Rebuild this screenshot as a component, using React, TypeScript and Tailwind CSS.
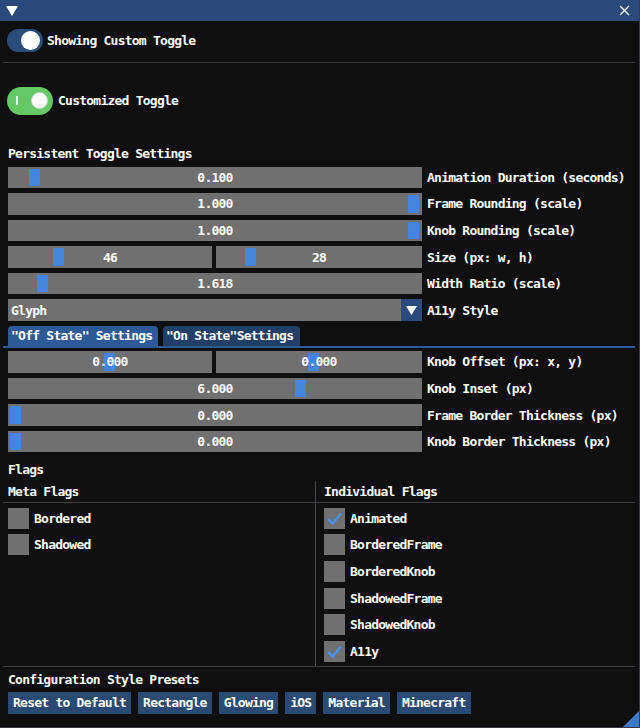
import React from "react";

const Slider = ({
  text,
  grab,
  className = "w-[414px]",
}: {
  text: string;
  grab: number;
  className?: string;
}) => (
  <div className={`relative h-[21.6px] bg-[#707070] flex items-center justify-center ${className}`}>
    <div className="absolute top-[2px] bottom-[2px] w-[11px] bg-[#4485df]" style={{ left: grab }} />
    <span className="relative">{text}</span>
  </div>
);

const Row = ({ label, children }: { label: string; children: React.ReactNode }) => (
  <div className="flex items-center gap-[5px] h-[21.6px]">
    {children}
    <span>{label}</span>
  </div>
);

const Check = ({ label, checked = false }: { label: string; checked?: boolean }) => (
  <div className="flex items-center gap-[5px] h-[21.6px]">
    <div className="w-[21px] h-[21px] bg-[#707070] flex items-center justify-center">
      {checked && (
        <svg width="21" height="21" viewBox="0 0 21 21">
          <polyline points="4,11 8.5,15.5 17,5.5" fill="none" stroke="#4a90e8" strokeWidth="2.6" />
        </svg>
      )}
    </div>
    <span>{label}</span>
  </div>
);

const presets = ["Reset to Default", "Rectangle", "Glowing", "iOS", "Material", "Minecraft"];

export default function App() {
  return (
    <div className="relative w-[640px] h-[728px] bg-[#0f0f0f] text-white font-['DejaVu_Sans_Mono',monospace] font-bold text-[13px] tracking-[-0.76px] leading-[13px] border-r border-b border-[#3a3a42] overflow-hidden">
      {/* title bar */}
      <div className="h-[21px] bg-[#294a7a] flex items-center justify-between pl-[6px] pr-[9px]">
        <svg width="12" height="10" viewBox="0 0 12 10">
          <polygon points="0,0 12,0 6,10" fill="#fff" />
        </svg>
        <svg width="11" height="11" viewBox="0 0 11 11">
          <path d="M1 1 L10 10 M10 1 L1 10" stroke="#fff" strokeWidth="1.4" />
        </svg>
      </div>

      <div className="flex flex-col pl-[8px] pr-[4px]">
        {/* toggle 1 */}
        <div className="mt-[8px] flex items-center gap-[4px] h-[23px] -ml-[1px]">
          <div className="w-[36px] h-[23px] rounded-full bg-[#2b4b78] flex items-center justify-end pr-[3px]">
            <div className="w-[19px] h-[19px] rounded-full bg-white" />
          </div>
          <span>Showing Custom Toggle</span>
        </div>

        <div className="mt-[9.5px] h-[1px] bg-[#36363d] -ml-[5px]" />

        {/* toggle 2 */}
        <div className="mt-[24px] flex items-center gap-[5px] h-[28px] -ml-[1px]">
          <div className="w-[46px] h-[28px] rounded-full bg-[#64c864] flex items-center justify-between pl-[9px] pr-[5px]">
            <div className="w-[1.5px] h-[9px] bg-[#e8f6e8]" />
            <div className="w-[17px] h-[17px] rounded-full bg-white border border-[#d0d0d0]" />
          </div>
          <span>Customized Toggle</span>
        </div>

        <div className="mt-[32.5px]">Persistent Toggle Settings</div>

        <div className="mt-[6.5px] flex flex-col gap-[5px]">
          <Row label="Animation Duration (seconds)">
            <Slider text="0.100" grab={21} />
          </Row>
          <Row label="Frame Rounding (scale)">
            <Slider text="1.000" grab={400} />
          </Row>
          <Row label="Knob Rounding (scale)">
            <Slider text="1.000" grab={400} />
          </Row>
          <Row label="Size (px: w, h)">
            <div className="flex gap-[4px]">
              <Slider text="46" grab={45} className="w-[204px]" />
              <Slider text="28" grab={29} className="w-[206px]" />
            </div>
          </Row>
          <Row label="Width Ratio (scale)">
            <Slider text="1.618" grab={29} />
          </Row>
          <Row label="A11y Style">
            <div className="w-[414px] h-[21.6px] bg-[#707070] flex items-center justify-between">
              <span className="pl-[3px]">Glyph</span>
              <div className="w-[21px] h-full bg-[#294a7a] flex items-center justify-center">
                <svg width="11" height="9" viewBox="0 0 11 9">
                  <polygon points="0,0 11,0 5.5,9" fill="#fff" />
                </svg>
              </div>
            </div>
          </Row>
        </div>

        {/* tabs */}
        <div className="mt-[4.5px] flex gap-[5px] h-[20px]">
          <div className="w-[150px] rounded-t-[4px] bg-[#2d5a95] flex items-center pl-[3px]">"Off State" Settings</div>
          <div className="w-[137px] rounded-t-[4px] bg-[#223f68] flex items-center pl-[3px]">"On State"Settings</div>
        </div>
        <div className="h-[2px] bg-[#2d5a95] -ml-[5px]" />

        <div className="mt-[3.5px] flex flex-col gap-[5px]">
          <Row label="Knob Offset (px: x, y)">
            <div className="flex gap-[4px]">
              <Slider text="0.000" grab={96} className="w-[204px]" />
              <Slider text="0.000" grab={92} className="w-[206px]" />
            </div>
          </Row>
          <Row label="Knob Inset (px)">
            <Slider text="6.000" grab={287} />
          </Row>
          <Row label="Frame Border Thickness (px)">
            <Slider text="0.000" grab={2} />
          </Row>
          <Row label="Knob Border Thickness (px)">
            <Slider text="0.000" grab={2} />
          </Row>
        </div>

        <div className="mt-[10.5px]">Flags</div>

        {/* flags table */}
        <div className="mt-[5px] -ml-[5px] grid grid-cols-[313px_1fr] border-b border-[#3b3b41]">
          <div className="border-r border-[#46464e] flex flex-col">
            <div className="pl-[5px] pt-[4px] h-[22px] border-b border-[#3b3b41]">Meta Flags</div>
            <div className="pl-[5px] mt-[4.5px] mb-[4px] flex flex-col gap-[5px]">
              <Check label="Bordered" />
              <Check label="Shadowed" />
            </div>
          </div>
          <div className="flex flex-col">
            <div className="pl-[8px] pt-[4px] h-[22px] border-b border-[#3b3b41]">Individual Flags</div>
            <div className="pl-[8px] mt-[4.5px] mb-[3.5px] flex flex-col gap-[5px]">
              <Check label="Animated" checked />
              <Check label="BorderedFrame" />
              <Check label="BorderedKnob" />
              <Check label="ShadowedFrame" />
              <Check label="ShadowedKnob" />
              <Check label="A11y" checked />
            </div>
          </div>
        </div>

        <div className="mt-[6.5px]">Configuration Style Presets</div>

        <div className="mt-[5.5px] flex gap-[7px]">
          {presets.map((p) => (
            <div key={p} className="h-[22px] px-[5px] bg-[#2b4a73] flex items-center">
              {p}
            </div>
          ))}
        </div>
      </div>

      {/* resize grip */}
      <svg className="absolute right-0 bottom-0" width="16" height="16" viewBox="0 0 16 16">
        <polygon points="16,0 16,16 0,16" fill="#4079c4" />
      </svg>
    </div>
  );
}
